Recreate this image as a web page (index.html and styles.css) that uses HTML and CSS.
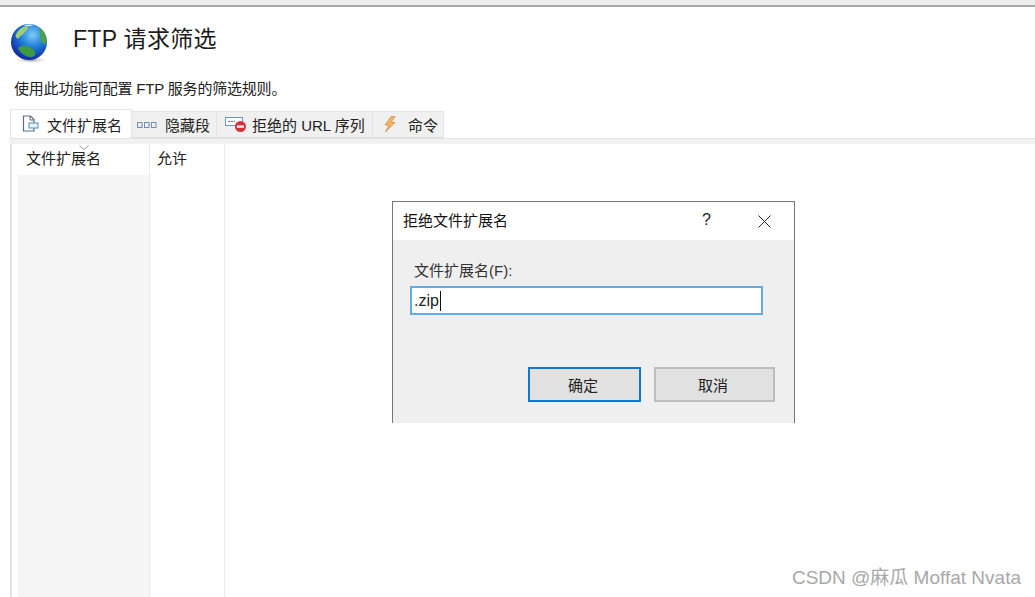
FILE: index.html
```html
<!DOCTYPE html>
<html lang="zh-CN">
<head>
<meta charset="utf-8">
<title>FTP 请求筛选</title>
<link rel="stylesheet" href="styles.css">
</head>
<body>
<div class="topbar"></div>
<header class="head">
  <svg class="globe" width="40" height="42" viewBox="0 0 40 42">
    <defs>
      <radialGradient id="sea" cx="0.6" cy="0.3" r="0.75">
        <stop offset="0" stop-color="#7fcdf5"/>
        <stop offset="0.45" stop-color="#1f7ed8"/>
        <stop offset="0.85" stop-color="#1436b0"/>
        <stop offset="1" stop-color="#0f2a86"/>
      </radialGradient>
      <radialGradient id="shade" cx="0.5" cy="0.5" r="0.5">
        <stop offset="0" stop-color="#777" stop-opacity="0.8"/>
        <stop offset="1" stop-color="#bbb" stop-opacity="0"/>
      </radialGradient>
    </defs>
    <ellipse cx="21" cy="37" rx="15" ry="3" fill="url(#shade)"/>
    <circle cx="19" cy="19" r="18" fill="url(#sea)"/>
    <path d="M6 11 C8 7 12 4 16 3 C20 4 17 7 15 9 C13 12 10 13 8 16 C6 15 5 13 6 11Z" fill="#9ccb7a"/>
    <path d="M30 5 C34 8 36 12 36.500 18 C36 23 34 22 32 19 C30 16 30 14 31 12 C29 10 29 8 30 5Z" fill="#4f9f45"/>
    <path d="M8 25 C12 22 17 22 21 25 C24 27 26 29 25 32 C23 35 19 34 16 33 C12 31 9 28 8 25Z" fill="#3f9a42"/>
    <path d="M14 2.500 C17 1 21 1 23 2.500 C20 3.500 17 3.500 14 2.500Z" fill="#d9eefb"/>
  </svg>
  <h1 class="title">FTP 请求筛选</h1>
</header>
<p class="desc">使用此功能可配置 FTP 服务的筛选规则。</p>
<nav class="tabs">
  <div class="tab active">
    <svg class="ic" width="18" height="18" viewBox="0 0 18 18"><path d="M2.500 1H9.500L13 4.500V16H2.500Z" fill="#fff" stroke="#5f6c82" stroke-width="1.200"/><path d="M9 1V5H13" fill="none" stroke="#5f6c82"/><rect x="8" y="8" width="9" height="5" fill="#e6f1f8" stroke="#4d8fb5"/></svg>
    <span>文件扩展名</span>
  </div>
  <div class="tab w2">
    <svg class="ic" width="20" height="10" viewBox="0 0 20 10"><g fill="none" stroke="#6f8db5"><rect x="0.500" y="2.500" width="4.500" height="5"/><rect x="7.500" y="2.500" width="4.500" height="5"/><rect x="14.500" y="2.500" width="4.500" height="5"/></g><path d="M5 5H7.500M12 5H14.500" stroke="#999" stroke-dasharray="1 1"/></svg>
    <span>隐藏段</span>
  </div>
  <div class="tab w3">
    <svg class="ic" width="22" height="16" viewBox="0 0 22 16"><rect x="0.500" y="0.500" width="17" height="8" fill="#fff" stroke="#6e94c4"/><path d="M3 4.500H10" stroke="#666" stroke-dasharray="2 1"/><circle cx="15.500" cy="9.500" r="5.500" fill="#d8303a"/><rect x="12" y="8.500" width="7" height="2.200" fill="#fff"/></svg>
    <span>拒绝的 URL 序列</span>
  </div>
  <div class="tab w4">
    <svg class="ic" width="14" height="17" viewBox="0 0 14 17"><path d="M8 0.500 L2 9 H6 L2.500 16 L12 6.500 H8 L12 0.500Z" fill="#f4b860" stroke="#c9703a" stroke-width="0.600"/></svg>
    <span>命令</span>
  </div>
</nav>
<div class="rule"></div>
<main class="panel">
  <div class="col col-name">
    <div class="colhead">
      <svg class="sort" width="10" height="5" viewBox="0 0 10 5"><path d="M0.500 0.500L5 4.500L9.500 0.500" fill="none" stroke="#999"/></svg>
      文件扩展名
    </div>
  </div>
  <div class="col col-allow"><div class="colhead">允许</div></div>
</main>
<section class="dialog">
  <div class="dlg-title">
    <span class="dlg-name">拒绝文件扩展名</span>
    <span class="dlg-help">?</span>
    <svg class="dlg-close" width="13" height="13" viewBox="0 0 13 13"><path d="M0.500 0.500L12.500 12.500M12.500 0.500L0.500 12.500" stroke="#222" fill="none"/></svg>
  </div>
  <div class="dlg-body">
    <label class="dlg-label">文件扩展名(F):</label>
    <div class="dlg-input">.zip<i class="caret"></i></div>
    <div class="dlg-btns">
      <div class="btn primary">确定</div>
      <div class="btn">取消</div>
    </div>
  </div>
</section>
<div class="mark">CSDN @麻瓜 Moffat Nvata</div>
</body>
</html>
```
FILE: styles.css
```css
* { box-sizing: border-box; }
html, body { margin: 0; height: 597px; overflow: hidden; }
body {
  position: relative;
  width: 1035px;
  background: #fff;
  color: #222;
  font-family: "Liberation Sans", "Noto Sans CJK SC", sans-serif;
  font-size: 15px;
  display: flex;
  flex-direction: column;
}
.topbar { height: 7px; background: #ececec; border-bottom: 2px solid #a9a9a9; flex: none; }
.head { display: flex; align-items: flex-start; height: 60px; padding: 16px 0 0 10px; flex: none; }
.globe { flex: none; }
.title { margin: 1px 0 0 23px; font-size: 23px; font-weight: 400; line-height: 30px; color: #1c1c1c; letter-spacing: 0.300px; }
.desc { margin: 12px 0 0 14px; font-size: 15px; letter-spacing: -0.200px; line-height: 20px; height: 30px; color: #222; flex: none; }
.tabs { display: flex; align-items: flex-end; height: 29px; margin-left: 10px; flex: none; }
.tab {
  height: 27px;
  display: flex;
  align-items: center;
  background: #f0f0f0;
  border: 1px solid #e4e4e4;
  border-left: 0;
  border-bottom-color: #dcdcdc;
  padding-left: 5px;
  font-size: 15px;
  white-space: nowrap;
  color: #222;
}
.tab.active { width: 122px; height: 29px; background: #fff; border-left: 1px solid #e4e4e4; border-bottom: 0; padding-left: 10px; gap: 8px; position: relative; z-index: 1; }
.w2 { width: 85px; gap: 8px; }
.w3 { width: 156px; padding-left: 8px; gap: 5px; }
.w4 { width: 71px; padding-left: 10px; gap: 11px; }
.ic { flex: none; }
.rule { height: 6px; margin-left: 10px; background: #f1f1f1; border-top: 1px solid #e4e4e4; flex: none; }
.panel {
  flex: 1;
  display: flex;
  margin-left: 10px;
  border-left: 2px solid #e2e2e2;
  padding-left: 6px;
}
.col { display: flex; flex-direction: column; font-size: 15px; }
.col-name { width: 132px; background: #f5f5f5; border-right: 1px solid #e3edf8; }
.col-allow { width: 75px; border-right: 1px solid #e3edf8; }
.colhead { position: relative; height: 31px; padding: 4px 0 0 8px; line-height: 22px; background: #fff; }
.col-allow .colhead { padding-left: 7px; }
.sort { position: absolute; left: 61px; top: 1px; }
.dialog {
  position: absolute;
  left: 392px;
  top: 201px;
  width: 403px;
  height: 222px;
  background: #efefef;
  border: 1px solid #777;
  border-bottom: 0;
  display: flex;
  flex-direction: column;
}
.dlg-title { height: 38px; background: #fff; display: flex; align-items: center; padding: 0 0 3px 10px; flex: none; }
.dlg-name { flex: 1; font-size: 15px; color: #111; }
.dlg-help { width: 13px; margin-right: 43px; font-size: 16px; color: #222; }
.dlg-close { margin: 3px 23px 0 0; }
.dlg-body { flex: 1; display: flex; flex-direction: column; padding: 20px 19px 0 21px; }
.dlg-label { font-size: 15px; line-height: 22px; height: 26px; color: #333; }
.dlg-input {
  width: 353px;
  height: 29px;
  margin-left: -4px;
  background: #fff;
  border: 2px solid #62abe4;
  padding-left: 2px;
  font-size: 16px;
  color: #222;
  display: flex;
  align-items: center;
}
.caret { width: 1px; height: 20px; background: #111; margin-left: 1px; }
.dlg-btns { display: flex; justify-content: flex-end; gap: 13px; margin-top: 52px; }
.btn {
  width: 121px;
  height: 35px;
  padding-right: 3px;
  background: #e1e1e1;
  border: 2px solid #bdbdbd;
  display: flex;
  align-items: center;
  justify-content: center;
  font-size: 15px;
  color: #222;
}
.btn.primary { width: 113px; border: 2px solid #0f78d0; }
.mark {
  position: absolute;
  right: 14px;
  top: 566px;
  font-size: 19px;
  line-height: 24px;
  color: #a8a8a8;
  white-space: nowrap;
  font-family: "Liberation Sans", "Noto Sans CJK SC", sans-serif;
}
```
